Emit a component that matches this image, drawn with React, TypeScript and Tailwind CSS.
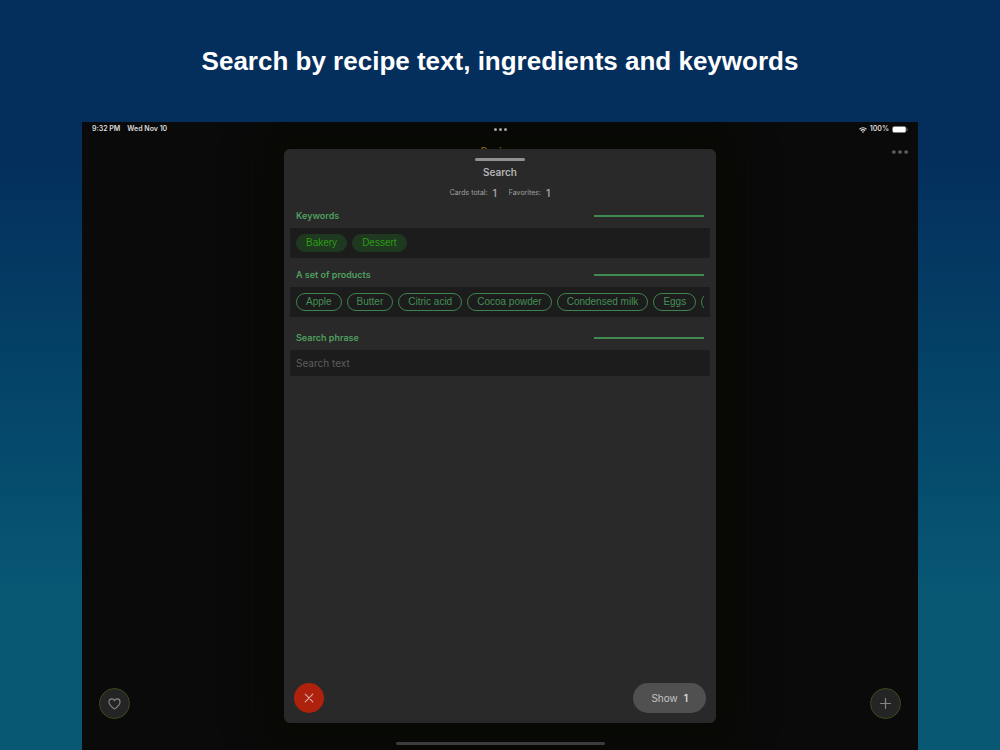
import { useState } from "react";
import clsx from "clsx";

const KEYWORDS = ["Bakery", "Dessert"];
const PRODUCTS = ["Apple", "Butter", "Citric acid", "Cocoa powder", "Condensed milk", "Eggs", "Flour"];

const StatusBar = () => (
  <div className="flex h-[15px] items-center justify-between px-2.5 text-[7px] font-semibold text-[#dcdcdc]">
    <div className="flex flex-1 gap-[7px]">
      <span>9:32 PM</span>
      <span>Wed Nov 10</span>
    </div>
    <Dots className="h-[3px] w-[13px] text-[#a6a6a6]" />
    <div className="flex flex-1 items-center justify-end gap-[3px]">
      <svg viewBox="0 0 16 12" className="h-1.5 w-2" fill="none" stroke="currentColor" strokeWidth="2.4">
        <path d="M1 4.4a10 10 0 0 1 14 0" />
        <path d="M3.8 7.4a6 6 0 0 1 8.4 0" />
        <path d="M8 12 5.8 9.6a3.2 3.2 0 0 1 4.4 0Z" fill="currentColor" stroke="none" />
      </svg>
      <span>100%</span>
      <svg viewBox="0 0 32 14" className="h-[7px] w-4">
        <rect x="0.75" y="0.75" width="27.5" height="12.5" rx="4" fill="none" stroke="#777" strokeWidth="1.5" />
        <rect x="1.5" y="1.5" width="26" height="11" rx="3" fill="#fff" />
        <path d="M30 4.5c2 .8 2 4.200 0 5Z" fill="#777" />
      </svg>
    </div>
  </div>
);

const Dots = ({ className }: { className: string }) => (
  <svg viewBox="0 0 26 6" className={className} fill="currentColor">
    <circle cx="3" cy="3" r="3" />
    <circle cx="13" cy="3" r="3" />
    <circle cx="23" cy="3" r="3" />
  </svg>
);

const SectionTitle = ({ title, htmlFor, className }: { title: string; htmlFor?: string; className?: string }) => (
  <div className={clsx("flex h-[25px] items-center justify-between px-1.5", className)}>
    {htmlFor ? (
      <label htmlFor={htmlFor} className="text-[9px] font-semibold text-[#4f9f5f]">{title}</label>
    ) : (
      <h3 className="text-[9px] font-semibold text-[#4f9f5f]">{title}</h3>
    )}
    <div className="h-0.5 w-[110px] bg-[#3f8a4e]"></div>
  </div>
);

const Chips = ({ items, filled }: { items: string[]; filled?: boolean }) => (
  <div className="bg-[#1c1c1c] px-1.5 py-1.5">
    <div className="flex gap-[5px] overflow-hidden">
      {items.map((item) => (
        <button
          key={item}
          type="button"
          className={clsx(
            "h-[18px] shrink-0 rounded-full border px-[9px] font-['Liberation_Sans',sans-serif] text-[10px] leading-4",
            filled ? "border-[#1f3820] bg-[#1f3820] text-[#2c9d14]" : "border-[#3f8350] text-[#458f56]",
          )}
        >
          {item}
        </button>
      ))}
    </div>
  </div>
);

const SearchSheet = () => {
  const [phrase, setPhrase] = useState("");

  return (
    <section className="relative flex flex-1 flex-col rounded-md bg-[#292929] px-1.5 pt-[9px] pb-2.5">
      <div className="mx-auto h-[3px] w-[50px] rounded-full bg-[#919191]"></div>
      <h2 className="mt-[3px] text-center text-[10px] leading-4 font-semibold text-[#b4b4b4]">Search</h2>
      <div className="mt-1.5 flex h-3.5 items-center justify-center gap-3 text-[7px] text-[#a0a0a0]">
        <p className="flex items-center gap-[5px]">
          Cards total: <b className="text-[10px] font-semibold">1</b>
        </p>
        <p className="flex items-center gap-[5px]">
          Favorites: <b className="text-[10px] font-semibold">1</b>
        </p>
      </div>

      <SectionTitle title="Keywords" className="mt-[3px]" />
      <Chips items={KEYWORDS} filled />

      <SectionTitle title="A set of products" className="mt-1" />
      <Chips items={PRODUCTS} />

      <SectionTitle title="Search phrase" htmlFor="phrase" className="mt-2" />
      <input
        id="phrase"
        type="text"
        value={phrase}
        onChange={(e) => setPhrase(e.target.value)}
        placeholder="Search text"
        className="h-[26px] w-full bg-[#1c1c1c] px-1.5 text-[10px] text-[#b4b4b4] outline-none placeholder:text-[#5c5c5e]"
      />

      <div className="mt-auto flex items-center justify-between px-1">
        <button
          type="button"
          aria-label="Close"
          className="flex size-[30px] items-center justify-center rounded-full bg-[#ae220d] text-[#d4b0aa]"
        >
          <svg viewBox="0 0 10 10" className="size-2.5" stroke="currentColor" strokeWidth="1.1" strokeLinecap="round">
            <path d="M1.200 1.200 8.800 8.800M8.800 1.200 1.200 8.800" />
          </svg>
        </button>
        <button
          type="button"
          className="flex h-[30px] items-center gap-1.5 rounded-full bg-[#505050] px-[18px] text-[10px] text-[#c4c4c4]"
        >
          Show <b className="font-semibold text-[#dadada]">1</b>
        </button>
      </div>
    </section>
  );
};

const roundButton =
  "flex size-[31px] items-center justify-center rounded-full border border-[#3a4c18] bg-[#242424] text-[#858585]";

const App = () => {
  return (
    <div className="flex min-h-screen flex-col bg-linear-to-b from-[#042e5c] from-20% to-[#085874] to-80% px-[82px] font-[Inter,sans-serif]">
      <h1 className="py-10 text-center font-['Liberation_Sans',sans-serif] text-[26px] leading-[42px] font-bold text-white">
        Search by recipe text, ingredients and keywords
      </h1>

      <main className="flex flex-1 flex-col overflow-hidden bg-[#0a0a0a]">
        <div className="relative z-10">
          <StatusBar />
        </div>
        <div className="grid flex-1 grid-cols-[1fr_minmax(0,432px)_1fr] pt-3">
          <div className="flex items-end pb-1 pl-[17px]">
            <button type="button" aria-label="Favorites" className={roundButton}>
              <svg viewBox="0 0 14 13" className="h-3 w-[13px]" fill="none" stroke="currentColor" strokeWidth="1.200" strokeLinejoin="round">
                <path d="M7 12.100C3.500 9.600 1 7.300 1 4.400 1 2.400 2.400 1 4.100 1 5.400 1 6.500 1.700 7 3 7.500 1.700 8.600 1 9.900 1 11.600 1 13 2.400 13 4.400c0 2.900-2.500 5.200-6 7.700Z" />
              </svg>
            </button>
          </div>
          <div className="relative flex rounded-md shadow-[0_0_36px_22px_#080a04]">
            {/* screen title, mostly covered by the sheet */}
            <p className="absolute inset-x-0 -top-1.5 text-center text-[10px] leading-4 font-semibold text-[#7a5c14]">
              Recipes
            </p>
            <SearchSheet />
          </div>
          <div className="flex flex-col items-end justify-between pb-1">
            <button type="button" aria-label="More" className="mr-2.5 text-[#5e5e5e]">
              <Dots className="mt-px h-1 w-4" />
            </button>
            <button type="button" aria-label="Add" className={clsx(roundButton, "mr-[17px]")}>
              <svg viewBox="0 0 10 10" className="size-[11px]" stroke="currentColor" strokeWidth="1.1" strokeLinecap="round">
                <path d="M5 .5v9M.5 5h9" />
              </svg>
            </button>
          </div>
        </div>
        <div className="relative flex h-[27px] items-end justify-center pb-[5px]">
          <div className="h-[3px] w-1/4 rounded-full bg-[#3c3c3c]"></div>
        </div>
      </main>
    </div>
  );
};

export default App;
